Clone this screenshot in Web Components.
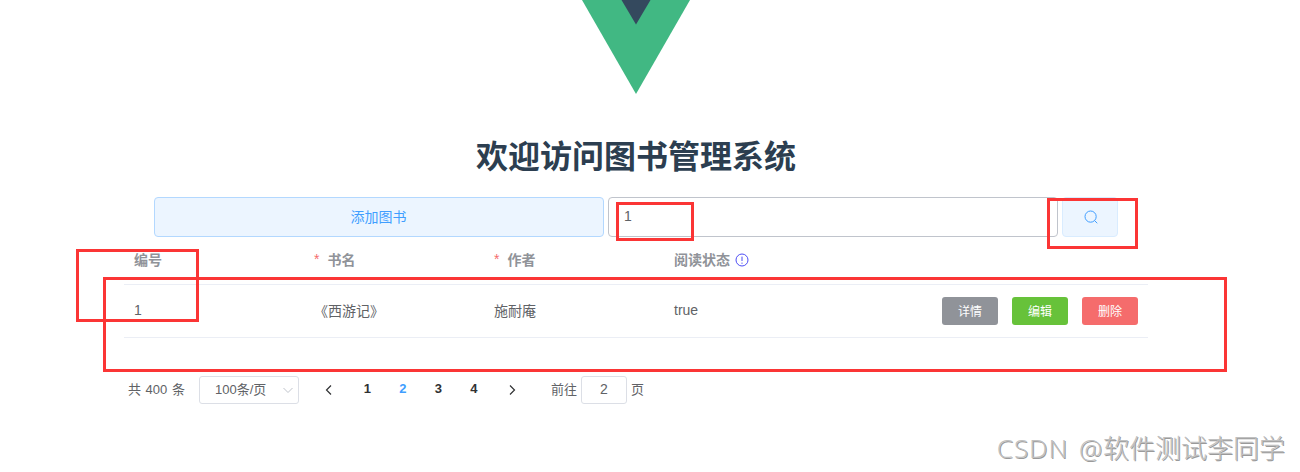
<!DOCTYPE html>
<html lang="zh">
<head>
<meta charset="utf-8">
<title>图书管理系统</title>
<style>
  html, body {
    margin: 0;
    height: 472px;
    overflow: hidden;
    background: #fff;
    font-family: "Liberation Sans", "Noto Sans CJK SC", sans-serif;
    color: #606266;
  }
</style>
</head>
<body>
<book-app>
  <vue-logo></vue-logo>
  <page-title>欢迎访问图书管理系统</page-title>
  <search-bar value="1"></search-bar>
  <book-table>
    <book-row id-no="1" name="《西游记》" author="施耐庵" status="true"></book-row>
  </book-table>
  <pager-bar></pager-bar>
</book-app>
<mark-box style="left:76px;top:249px;width:123px;height:73px"></mark-box>
<mark-box style="left:616px;top:202px;width:78px;height:39px"></mark-box>
<mark-box style="left:1047px;top:198px;width:91px;height:51px"></mark-box>
<mark-box style="left:103px;top:277px;width:1124px;height:95px"></mark-box>
<csdn-mark><span slot="latin">CSDN @</span>软件测试李同学</csdn-mark>

<script>
class BookApp extends HTMLElement {
  constructor() {
    super();
    this.attachShadow({ mode: 'open' }).innerHTML = `
      <style>
        :host { display: flex; flex-direction: column; align-items: center; width: 1272px; }
      </style>
      <slot></slot>`;
  }
}

class VueLogo extends HTMLElement {
  constructor() {
    super();
    this.attachShadow({ mode: 'open' }).innerHTML = `
      <style>
        :host { display: block; width: 108px; height: 94px; }
        svg { display: block; }
      </style>
      <svg width="108" height="94" viewBox="0 0 108 94">
        <polygon points="0,0 108,0 54,94" fill="#41b883"/>
        <polygon points="39.5,0 68.5,0 54,24.5" fill="#34495e"/>
      </svg>`;
  }
}

class PageTitle extends HTMLElement {
  constructor() {
    super();
    this.attachShadow({ mode: 'open' }).innerHTML = `
      <style>
        :host {
          display: block;
          margin-top: 40px;
          height: 63px;
          line-height: 46px;
          font-size: 32px;
          font-weight: 700;
          color: #2c3e50;
        }
      </style>
      <slot></slot>`;
  }
}

class SearchBar extends HTMLElement {
  constructor() {
    super();
    this.attachShadow({ mode: 'open' }).innerHTML = `
      <style>
        :host { display: flex; gap: 4px; width: 964px; height: 40px; font-size: 14px; }
        .btn {
          box-sizing: border-box;
          display: flex;
          align-items: center;
          justify-content: center;
          background: #ecf5ff;
          border: 1px solid #b3d8ff;
          border-radius: 4px;
          color: #409eff;
        }
        .add { width: 450px; padding: 0 1px 2px 0; }
        .input {
          box-sizing: border-box;
          width: 450px;
          display: flex;
          align-items: center;
          padding: 0 0 2px 15px;
          border: 1px solid #c0c4cc;
          border-radius: 4px;
          color: #606266;
        }
        .search { width: 56px; border-color: #d9ecff; padding-left: 1px; }
      </style>
      <div class="btn add">添加图书</div>
      <div class="input"></div>
      <div class="btn search">
        <svg width="14" height="14" viewBox="0 0 14 14" fill="none" stroke="#409eff" stroke-width="1">
          <circle cx="6.6" cy="6.6" r="5.6"/>
          <path d="M10.8 10.8L13 13" stroke-linecap="round"/>
        </svg>
      </div>`;
  }
  connectedCallback() {
    this.shadowRoot.querySelector('.input').textContent = this.getAttribute('value') || '';
  }
}

class BookTable extends HTMLElement {
  constructor() {
    super();
    this.attachShadow({ mode: 'open' }).innerHTML = `
      <style>
        :host { display: block; width: 1024px; font-size: 14px; margin-bottom: 38px; }
        .head {
          box-sizing: border-box;
          display: grid;
          grid-template-columns: 180px 180px 180px 1fr;
          height: 48px;
          padding-bottom: 4px;
          align-items: center;
          border-bottom: 1px solid #ebeef5;
          font-weight: 700;
          color: #909399;
        }
        .head > div { padding-left: 10px; display: flex; align-items: center; }
        .star { color: #f56c6c; margin-right: 8px; font-weight: 400; }
        svg { margin: 2px 0 0 5px; }
      </style>
      <div class="head">
        <div>编号</div>
        <div><span class="star">*</span>书名</div>
        <div><span class="star">*</span>作者</div>
        <div>阅读状态
          <svg width="14" height="14" viewBox="0 0 14 14" fill="none" stroke="#4d4df5">
            <circle cx="7" cy="7" r="6"/>
            <path d="M7 3.6V8M7 9.6v1.2"/>
          </svg>
        </div>
      </div>
      <slot></slot>`;
  }
}

class BookRow extends HTMLElement {
  constructor() {
    super();
    const a = n => this.getAttribute(n);
    this.attachShadow({ mode: 'open' }).innerHTML = `
      <style>
        :host {
          display: grid;
          grid-template-columns: 180px 180px 180px 1fr;
          align-items: center;
          height: 53px;
          box-sizing: border-box;
          border-bottom: 1px solid #ebeef5;
          color: #606266;
        }
        .cell { padding: 0 0 2px 10px; }
        .ops { display: flex; align-items: center; gap: 14px; padding: 0 10px; }
        .status { margin-right: auto; padding-bottom: 2px; }
      </style>
      <div class="cell">${a('id-no')}</div>
      <div class="cell">${a('name')}</div>
      <div class="cell">${a('author')}</div>
      <div class="ops">
        <span class="status">${a('status')}</span>
        <small-btn color="#909399">详情</small-btn>
        <small-btn color="#67c23a">编辑</small-btn>
        <small-btn color="#f56c6c">删除</small-btn>
      </div>`;
  }
}

class SmallBtn extends HTMLElement {
  constructor() {
    super();
    this.attachShadow({ mode: 'open' }).innerHTML = `
      <style>
        :host {
          box-sizing: border-box;
          display: flex;
          align-items: center;
          justify-content: center;
          width: 56px;
          height: 28px;
          padding-bottom: 2px;
          border-radius: 3px;
          font-size: 12px;
          color: #fff;
          background: var(--bg);
        }
      </style>
      <slot></slot>`;
  }
  connectedCallback() {
    this.style.setProperty('--bg', this.getAttribute('color'));
  }
}

class PagerBar extends HTMLElement {
  constructor() {
    super();
    this.attachShadow({ mode: 'open' }).innerHTML = `
      <style>
        :host {
          display: flex;
          align-items: center;
          align-self: flex-start;
          margin-left: 128px;
          height: 28px;
          font-size: 13px;
          color: #606266;
        }
        span { padding-bottom: 3px; }
        .total { width: 57px; word-spacing: 1px; white-space: nowrap; }
        .select, .jump {
          box-sizing: border-box;
          height: 28px;
          padding-bottom: 3px;
          border: 1px solid #dcdfe6;
          border-radius: 3px;
          display: flex;
          align-items: center;
        }
        .select { width: 100px; margin-left: 14px; padding-left: 15px; }
        .select svg { margin: 3px 4px 0 auto; }
        .arrow { width: 35.5px; display: flex; justify-content: center; padding: 0; }
        .prev { margin-left: 10px; width: 40.5px; }
        .next { margin-left: 3px; }
        .num { width: 35.5px; text-align: center; font-weight: 700; color: #303133; }
        .num.on { color: #409eff; }
        .goto { margin-left: 21px; }
        .jump { width: 46px; margin: 0 4px; justify-content: center; font-size: 14px; }
      </style>
      <span class="total">共 400 条</span>
      <div class="select">100条/页
        <svg width="12" height="12" viewBox="0 0 12 12" fill="none" stroke="#c0c4cc"><path d="M1.5 4L6 8.5 10.5 4"/></svg>
      </div>
      <span class="arrow prev"><svg width="12" height="12" viewBox="0 0 12 12" fill="none" stroke="#303133" stroke-width="1.2"><path d="M8 1.5L3.5 6 8 10.5"/></svg></span>
      <span class="num">1</span>
      <span class="num on">2</span>
      <span class="num">3</span>
      <span class="num">4</span>
      <span class="arrow next"><svg width="12" height="12" viewBox="0 0 12 12" fill="none" stroke="#303133" stroke-width="1.2"><path d="M4 1.5L8.5 6 4 10.5"/></svg></span>
      <span class="goto">前往</span>
      <div class="jump">2</div>
      <span>页</span>`;
  }
}

// red boxes someone drew on top of the screenshot
class MarkBox extends HTMLElement {
  constructor() {
    super();
    this.attachShadow({ mode: 'open' }).innerHTML = `
      <style>
        :host { display: block; position: absolute; box-sizing: border-box; border: 3px solid #fb3535; }
      </style>`;
  }
}

class CsdnMark extends HTMLElement {
  constructor() {
    super();
    this.attachShadow({ mode: 'open' }).innerHTML = `
      <style>
        :host {
          display: block;
          position: absolute;
          right: 15px;
          top: 430px;
          line-height: 36px;
          font-size: 26px;
          font-family: "Open Sans", "Noto Sans CJK SC", sans-serif;
          font-weight: 300;
          white-space: nowrap;
          color: #c0c0c0;
          text-shadow: 1px 1px 0 #9a9a9a;
        }
        .latin { letter-spacing: 1px; word-spacing: 3px; }
      </style>
      <span class="latin"><slot name="latin"></slot></span><slot></slot>`;
  }
}

customElements.define('book-app', BookApp);
customElements.define('vue-logo', VueLogo);
customElements.define('page-title', PageTitle);
customElements.define('search-bar', SearchBar);
customElements.define('book-table', BookTable);
customElements.define('book-row', BookRow);
customElements.define('small-btn', SmallBtn);
customElements.define('pager-bar', PagerBar);
customElements.define('mark-box', MarkBox);
customElements.define('csdn-mark', CsdnMark);
</script>
</body>
</html>
